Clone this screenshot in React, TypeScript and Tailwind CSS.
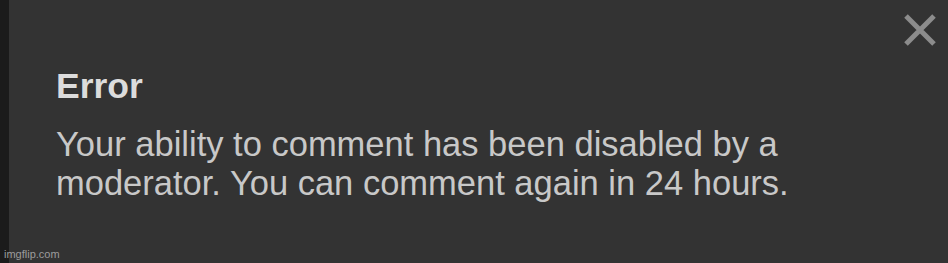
import React from "react";

export default function App() {
  return (
    <div className="relative flex h-[263px] w-[948px] overflow-hidden bg-[#333333] font-['Liberation_Sans',Arial,sans-serif]">
      <div className="w-[9px] shrink-0 bg-[#1b1b1b]" />
      <div className="flex flex-1 flex-col pl-[47px] pt-[66px]">
        <h1 className="text-[35.5px] font-bold leading-[40px] text-[#dcdcdc]">Error</h1>
        <p className="mt-[19px] text-[34.5px] leading-[39px] text-[#c8c8c8]">
          Your ability to comment has been disabled by a
          <br />
          moderator. You can comment again in 24 hours.
        </p>
      </div>
      <button className="absolute right-[10px] top-[12px] h-[36px] w-[36px]" aria-label="Close">
        <svg viewBox="0 0 36 36" className="h-full w-full">
          <path d="M4 4 L32 32 M32 4 L4 32" stroke="#8c8c8c" strokeWidth="5" strokeLinecap="butt" />
        </svg>
      </button>
      <div className="absolute bottom-[2px] left-[4px] text-[11px] leading-[13px] text-[#9c9c9c]">imgflip.com</div>
    </div>
  );
}
